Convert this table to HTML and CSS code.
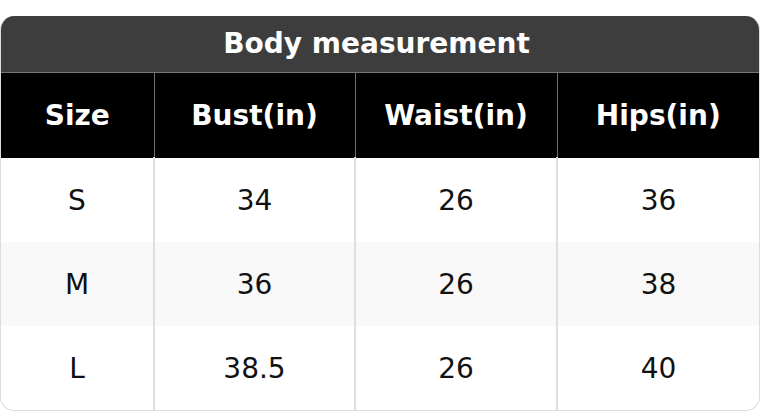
FILE: index.html
```html
<!DOCTYPE html>
<html>
<head>
<meta charset="utf-8">
<link rel="stylesheet" href="styles.css">
</head>
<body>
<div class="card">
  <div class="title">Body measurement</div>
  <table class="chart">
    <colgroup>
      <col class="c1"><col class="c2"><col class="c3"><col class="c4">
    </colgroup>
    <thead>
      <tr><th>Size</th><th>Bust(in)</th><th>Waist(in)</th><th>Hips(in)</th></tr>
    </thead>
    <tbody>
      <tr><td>S</td><td>34</td><td>26</td><td>36</td></tr>
      <tr class="alt"><td>M</td><td>36</td><td>26</td><td>38</td></tr>
      <tr><td>L</td><td>38.5</td><td>26</td><td>40</td></tr>
    </tbody>
  </table>
</div>
</body>
</html>
```
FILE: styles.css
```css
html, body {
  margin: 0;
  padding: 0;
  background: #fff;
}
body {
  padding-top: 16px;
  font-family: "DejaVu Sans", Verdana, sans-serif;
}
.card {
  width: 760px;
  box-sizing: border-box;
  border: 1px solid #dcdcdc;
  border-top: none;
  border-radius: 14px;
  overflow: hidden;
}
.title {
  height: 56px;
  background: #3d3d3d;
  color: #fff;
  font-weight: bold;
  font-size: 28px;
  line-height: 55px;
  text-align: center;
  padding-right: 7px;
  border-bottom: 1px solid #777;
}
.chart {
  width: 100%;
  border-collapse: collapse;
  table-layout: fixed;
}
.c1 { width: 153px; }
.c2 { width: 201px; }
.c3 { width: 202px; }
.chart th {
  background: #000;
  color: #fff;
  font-weight: bold;
  font-size: 28px;
  height: 84px;
  padding: 0;
  border-left: 1px solid #6f6f6f;
  border-bottom: 1px solid #000;
}
.chart td {
  height: 84px;
  padding: 0;
  text-align: center;
  font-size: 28px;
  color: #111;
  border-left: 2px solid #dedede;
}
.chart th:first-child, .chart td:first-child {
  border-left: none;
}
.chart tr.alt td {
  background: #f8f8f8;
}
```
